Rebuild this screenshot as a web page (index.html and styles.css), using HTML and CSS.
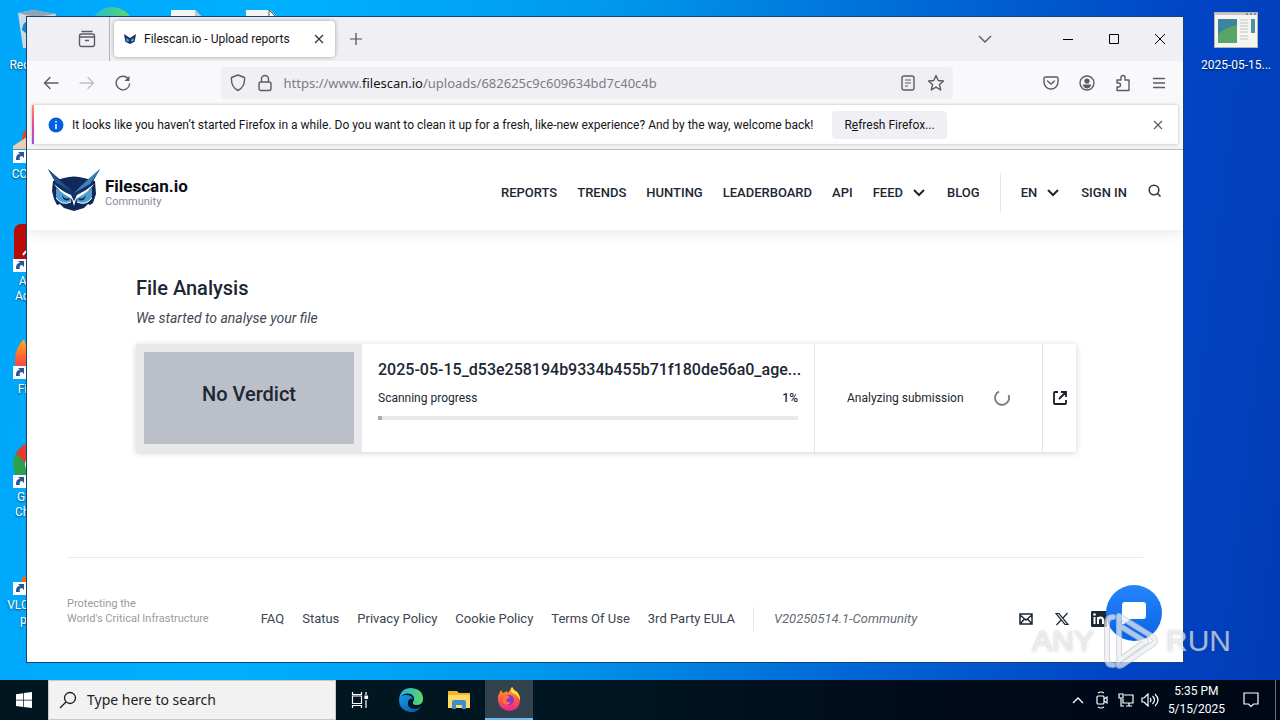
FILE: index.html
```html
<!DOCTYPE html>
<html lang="en">
<head>
<meta charset="utf-8">
<meta name="viewport" content="width=device-width, initial-scale=1">
<title>Filescan.io - Upload reports</title>
<link rel="stylesheet" href="styles.css">
</head>
<body>
<div class="desktop">
  <div class="shortcut recycle">
    <svg width="44" height="40" viewBox="0 0 44 40"><path d="M0 3 15 0l23 4-5 34H5z" fill="#c9dbe6"/><path d="m0 3 15-3 23 4-21 3z" fill="#8da5b4"/><path d="M5 15c4-6 9-3 8 1l-4 8-5-4z" fill="#1684cf"/></svg>
    <span>Recycle Bin</span>
  </div>
  <div class="shortcut edge-top">
    <svg width="44" height="44" viewBox="0 0 44 44"><defs><linearGradient id="eg"><stop offset="0" stop-color="#22b8dc"/><stop offset="1" stop-color="#62da62"/></linearGradient></defs><circle cx="22" cy="22" r="22" fill="url(#eg)"/></svg>
  </div>
  <div class="shortcut doc-a"><svg width="32" height="40" viewBox="0 0 32 40"><path d="M0 0h24l8 8v32H0z" fill="#f4f4f4"/><path d="M24 0v8h8z" fill="#b9c6ce"/></svg></div>
  <div class="shortcut doc-b"><svg width="32" height="40" viewBox="0 0 32 40"><path d="M0 0h24l8 8v32H0z" fill="#f4f4f4"/><path d="M23 0v9h9z" fill="#fff" stroke="#555"/></svg></div>
  <div class="shortcut row-1">
    <svg width="46" height="44" viewBox="0 0 46 44"><path d="M9 18C9 8 15 2 25 0v20z" fill="#df4429"/><path d="M0 23 14 14l20 4v8H0z" fill="#edcfad"/><rect y="27" width="13" height="13" fill="#fff"/><path d="M3 37c0-4 1-6 4-6l-2-2h6v6l-2-2c-2 0-3 2-2 4z" fill="#2a5699"/></svg>
    <span>CCleaner</span>
  </div>
  <div class="shortcut row-2">
    <svg width="46" height="48" viewBox="0 0 46 48"><rect x="1" width="44" height="46" rx="7" fill="#b80c09"/><path d="M10 31q3-5 8-5" stroke="#fff" stroke-width="2" fill="none"/><rect y="35" width="13" height="13" fill="#fff"/><path d="M3 45c0-4 1-6 4-6l-2-2h6v6l-2-2c-2 0-3 2-2 4z" fill="#2a5699"/></svg>
    <span>Adobe<br>Acrobat</span>
  </div>
  <div class="shortcut row-3">
    <svg width="46" height="44" viewBox="0 0 46 44"><defs><linearGradient id="ff" x2="0" y2="1"><stop offset="0" stop-color="#ffb01f"/><stop offset=".5" stop-color="#ff5a36"/><stop offset="1" stop-color="#e8249a"/></linearGradient></defs><path d="M2 20Q3 9 11 1l2 6 12-2 20 12v14L22 42Q1 38 2 20" fill="url(#ff)"/><rect y="28" width="13" height="13" fill="#fff"/><path d="M3 38c0-4 1-6 4-6l-2-2h6v6l-2-2c-2 0-3 2-2 4z" fill="#2a5699"/></svg>
    <span>Firefox</span>
  </div>
  <div class="shortcut row-4">
    <svg width="46" height="46" viewBox="0 0 46 46"><circle cx="22" cy="22" r="22" fill="#2ba14b"/><path d="M3 11Q10 0 22 0v22h-9z" fill="#e33a33"/><circle cx="22" cy="22" r="10" fill="#fff"/><rect y="33" width="13" height="13" fill="#fff"/><path d="M3 43c0-4 1-6 4-6l-2-2h6v6l-2-2c-2 0-3 2-2 4z" fill="#2a5699"/></svg>
    <span>Google<br>Chrome</span>
  </div>
  <div class="shortcut row-5">
    <svg width="46" height="44" viewBox="0 0 46 44"><path d="M9 24 15 21 20 0l18 40H9z" fill="#ee6d0a"/><rect y="28" width="13" height="13" fill="#fff"/><path d="M3 38c0-4 1-6 4-6l-2-2h6v6l-2-2c-2 0-3 2-2 4z" fill="#2a5699"/></svg>
    <span>VLC media<br>player</span>
  </div>
  <div class="shortcut file-icon">
    <svg width="44" height="36" viewBox="0 0 44 36"><rect x=".5" y=".5" width="43" height="35" fill="#f5f5f2" stroke="#b8b5ab"/><path d="M1 2h42" stroke="#c9c9c9" stroke-width="2"/><path d="M32 2h10" stroke="#31506e" stroke-width="1" stroke-dasharray="2 2"/><rect x="4" y="7" width="19" height="24" fill="#3f83a2"/><path d="M4 22Q12 15 23 13v18H4z" fill="#58a566"/><path d="M26 8h8m-8 3h8m-8 3h8m-8 3h8m-8 3h8m-8 4h8m-8 3h8" stroke="#bfc5c7"/><path d="M37 7h4v14h-4z" fill="#4b94a0"/></svg>
    <span>2025-05-15...</span>
  </div>

  <main class="window">
    <div class="tabbar">
      <button class="recent" aria-label="Recent browsing"><svg width="18" height="18" viewBox="0 0 18 18" fill="none" stroke="#5b5b66" stroke-width="1.4" stroke-linecap="round"><path d="M4 1.500h10"/><rect x="1.500" y="4" width="15" height="12.500" rx="2"/><path d="M2 7h14M7.500 10.500h3"/></svg></button>
      <div class="tab">
        <svg width="12" height="12" viewBox="0 0 52 44"><path d="M0 0 26 18 52 0 46 34 26 44 6 34z" fill="#123064"/><path d="M10 18l13 8-4 8-9-3zM42 18l-13 8 4 8 9-3z" fill="#5aa9d6"/></svg>
        <span class="tab-title">Filescan.io - Upload reports</span>
        <button class="tab-close" aria-label="Close tab"><svg width="10" height="10" viewBox="0 0 10 10" stroke="#333" stroke-width="1.200"><path d="m1 1 8 8M9 1 1 9"/></svg></button>
      </div>
      <button class="new-tab" aria-label="New tab"><svg width="12" height="12" viewBox="0 0 12 12" stroke="#4a4a52" stroke-width="1.200"><path d="M6 0v12M0 6h12"/></svg></button>
      <button class="all-tabs" aria-label="List all tabs"><svg width="14" height="8" viewBox="0 0 14 8" fill="none" stroke="#5b5b66" stroke-width="1.400"><path d="m1 1 6 6 6-6"/></svg></button>
      <button class="control" aria-label="Minimize"><svg width="10" height="10" viewBox="0 0 10 10" stroke="#000"><path d="M0 5.500h10"/></svg></button>
      <button class="control" aria-label="Maximize"><svg width="10" height="10" viewBox="0 0 10 10" fill="none" stroke="#000"><path d="M.5.5h9v9h-9z"/></svg></button>
      <button class="control" aria-label="Close"><svg width="12" height="12" viewBox="0 0 12 12" stroke="#000"><path d="m1 1 10 10M11 1 1 11"/></svg></button>
    </div>

    <div class="toolbar">
      <button class="tool" aria-label="Back"><svg width="16" height="16" viewBox="0 0 16 16" fill="none" stroke="#5b5b66" stroke-width="1.400" stroke-linecap="round" stroke-linejoin="round"><path d="M15 8H1.500M7 2.500 1.500 8 7 13.500"/></svg></button>
      <button class="tool" aria-label="Forward" disabled><svg width="16" height="16" viewBox="0 0 16 16" fill="none" stroke="#bdbdc3" stroke-width="1.400" stroke-linecap="round" stroke-linejoin="round"><path d="M1 8h13.500M9 2.500 14.500 8 9 13.500"/></svg></button>
      <button class="tool" aria-label="Reload"><svg width="16" height="16" viewBox="0 0 16 16" fill="none" stroke="#5b5b66" stroke-width="1.400" stroke-linecap="round"><path d="M13 3.500A6.800 6.800 0 1 0 14.700 9"/><path d="M14.500.8V6H9.500z" fill="#5b5b66" stroke="none"/></svg></button>
      <span class="spring"></span>
      <div class="urlbar">
        <svg width="16" height="18" viewBox="0 0 16 18" fill="none" stroke="#5b5b66" stroke-width="1.400" stroke-linejoin="round"><path d="m8 1 6.500 2.500c.5 6-1.500 10.500-6.500 13-5-2.500-7-7-6.500-13z"/></svg>
        <svg width="14" height="18" viewBox="0 0 14 18" fill="none" stroke="#5b5b66" stroke-width="1.400"><rect x="1" y="8" width="12" height="8.500" rx="2"/><path d="M3.500 8V5a3.500 3.500 0 0 1 7 0v3"/></svg>
        <div class="url" role="textbox" aria-label="Address" contenteditable="true" spellcheck="false">https://www.<b>filescan.io</b>/uploads/682625c9c609634bd7c40c4b</div>
        <svg width="14" height="16" viewBox="0 0 14 16" fill="none" stroke="#5b5b66" stroke-width="1.400"><rect x="1" y="1" width="12" height="14" rx="2"/><path d="M4 5h6M4 8h6M4 11h3" stroke-width="1.200"/></svg>
        <svg width="18" height="18" viewBox="0 0 18 18" fill="none" stroke="#5b5b66" stroke-width="1.400" stroke-linejoin="round"><path d="m9 1.500 2.200 5 5.300.5-4 3.600 1.200 5.400L9 13.200 4.300 16l1.200-5.400L1.500 7l5.300-.5z"/></svg>
      </div>
      <span class="spring"></span>
      <button class="tool" aria-label="Save to Pocket"><svg width="16" height="16" viewBox="0 0 16 16" fill="none" stroke="#5b5b66" stroke-width="1.400" stroke-linecap="round"><path d="M2.500 2h11q1.500 0 1.500 1.500V7A7 7 0 0 1 1 7V3.500Q1 2 2.500 2z"/><path d="m4.500 6 3.500 3 3.500-3"/></svg></button>
      <button class="tool" aria-label="Account"><svg width="16" height="16" viewBox="0 0 16 16" fill="none" stroke="#5b5b66" stroke-width="1.400"><circle cx="8" cy="8" r="7"/><circle cx="8" cy="6" r="2.600" fill="#5b5b66" stroke="none"/><path d="M3.500 9.500h9q-1.500 4-4.500 4t-4.500-4" fill="#5b5b66" stroke="none"/></svg></button>
      <button class="tool" aria-label="Extensions"><svg width="16" height="18" viewBox="0 0 16 18" fill="none" stroke="#5b5b66" stroke-width="1.400" stroke-linejoin="round"><path d="M2 6h4V3.500a2 2 0 0 1 4 0V6h4v10.500H2V13h1.500a2 2 0 0 0 0-4H2z"/></svg></button>
      <button class="tool" aria-label="Menu"><svg width="14" height="12" viewBox="0 0 14 12" stroke="#5b5b66" stroke-width="1.300"><path d="M1 1.500h12M1 6h12M1 10.500h12"/></svg></button>
    </div>

    <div class="notice-wrap">
      <div class="notice">
        <svg width="16" height="16" viewBox="0 0 16 16"><circle cx="8" cy="8" r="7.500" fill="#0560df"/><path d="M8 7v5M8 4v1.500" stroke="#fff" stroke-width="1.500"/></svg>
        <p>It looks like you haven’t started Firefox in a while. Do you want to clean it up for a fresh, like-new experience? And by the way, welcome back!</p>
        <button class="refresh">R<u>e</u>fresh Firefox...</button>
        <button class="notice-close" aria-label="Dismiss"><svg width="10" height="10" viewBox="0 0 10 10" stroke="#5b5b66" stroke-width="1.200"><path d="m1 1 8 8M9 1 1 9"/></svg></button>
      </div>
    </div>

    <div class="page">
      <header class="site-header">
        <a class="brand" href="#">
          <svg width="54" height="44" viewBox="0 0 54 44">
            <path d="M6 13 17 10q10-3 20 0l11 3 1 13-3 9-3 2-2-1-4 4-10 3-10-3-4-4-3 1-3-6-2-8z" fill="#12285c"/>
            <path d="M1 1 27 24 53 1 45 15 27 30 9 15z" fill="#153468"/>
            <path d="m53 1-17 15-9 9 16-9z" fill="#3d83b8"/>
            <path d="m1 1 14 14 10 8-16-8z" fill="#1f5590"/>
            <path d="M9 20q6 5 16 9l-1 5q-10 4-15-4M45 20q-6 5-16 9l1 5q10 4 15-4" fill="#4f9fd0"/>
            <path d="M7 16q9 8 17 11l3 6 3-6q9-4 17-11-4 7-15 13l-3 2-2 7-2-7-3-2Q11 23 7 16z" fill="#fff"/>
            <path d="M15 27q3 5 8 3l-1 2q-6 2-7-5M39 27q-3 5-8 3l1 2q6 2 7-5" fill="#12285c"/>
            <path d="M9 30q6 8 15 4M45 30q-6 8-15 4" fill="none" stroke="#fff"/>
          </svg>
          <span class="brand-text"><strong>Filescan.io</strong><small>Community</small></span>
        </a>
        <nav class="site-nav">
          <a href="#">REPORTS</a><a href="#">TRENDS</a><a href="#">HUNTING</a><a href="#">LEADERBOARD</a><a href="#">API</a>
          <button>FEED <svg width="12" height="8" viewBox="0 0 12 8" fill="none" stroke="#1b2733" stroke-width="2"><path d="m1 1 5 5 5-5"/></svg></button>
          <a href="#">BLOG</a>
          <span class="rule"></span>
          <button>EN <svg width="12" height="8" viewBox="0 0 12 8" fill="none" stroke="#1b2733" stroke-width="2"><path d="m1 1 5 5 5-5"/></svg></button>
          <a href="#">SIGN IN</a>
          <button class="search-btn" aria-label="Search"><svg width="14" height="14" viewBox="0 0 14 14" fill="none" stroke="#333b46" stroke-width="1.600"><circle cx="6" cy="6" r="4.800"/><path d="m9.500 9.500 3 3"/></svg></button>
        </nav>
      </header>

      <section class="analysis">
        <h1>File Analysis</h1>
        <p class="lead">We started to analyse your file</p>
        <article class="card">
          <div class="verdict"><div>No Verdict</div></div>
          <div class="details">
            <h2>2025-05-15_d53e258194b9334b455b71f180de56a0_age...</h2>
            <div class="progress-row"><label for="scan">Scanning progress</label><b>1%</b></div>
            <progress id="scan" value="1" max="100"></progress>
          </div>
          <div class="status"><span>Analyzing submission</span><svg width="16" height="16" viewBox="0 0 16 16" fill="none" stroke="#77797d" stroke-width="1.800"><path d="M5 1.500A7 7 0 1 0 14.500 5"/></svg></div>
          <a class="open" href="#" aria-label="Open report"><svg width="16" height="16" viewBox="0 0 16 16" fill="none" stroke="#17202c" stroke-width="1.800"><path d="M6 2H3q-1 0-1 1v10q0 1 1 1h10q1 0 1-1v-3M9 2h5v5M14 2 7 9"/></svg></a>
        </article>
      </section>

      <footer class="site-footer">
        <p class="motto">Protecting the<br>World's Critical Infrastructure</p>
        <nav class="footer-nav">
          <a href="#">FAQ</a><a href="#">Status</a><a href="#">Privacy Policy</a><a href="#">Cookie Policy</a><a href="#">Terms Of Use</a><a href="#">3rd Party EULA</a>
          <em>V20250514.1-Community</em>
        </nav>
        <div class="social">
          <a href="#" aria-label="Email"><svg width="14" height="12" viewBox="0 0 14 12" fill="none" stroke="#1b2733" stroke-width="1.500"><path d="M1 1h12v10H1zM1 2l6 5 6-5M1 11l4.500-5M13 11 8.500 6"/></svg></a>
          <a href="#" aria-label="X"><svg width="14" height="14" viewBox="0 0 14 14" fill="none" stroke="#1b2733"><path d="M1 1.500h3l9 11h-3zM12.500 1 8 6M6 8l-4.500 5" stroke-width="1.200"/></svg></a>
          <a href="#" aria-label="LinkedIn"><svg width="16" height="16" viewBox="0 0 16 16"><rect width="16" height="16" rx="1" fill="#1b2733"/><path d="M3.500 6v7M7 6v7M7 9q0-2.500 2.500-2.500T12 9v4" fill="none" stroke="#fff" stroke-width="2"/><circle cx="3.500" cy="3.500" r="1.300" fill="#fff"/></svg></a>
        </div>
      </footer>
      <button class="chat" aria-label="Open chat"><svg width="26" height="24" viewBox="0 0 26 24"><path d="M4 1h18q3 0 3 3v11q0 3-3 3H9l-6 5q-2 1-2-1V4q0-3 3-3" fill="#fff"/></svg></button>
    </div>
  </main>

  <div class="watermark" aria-hidden="true">
    <span>ANY</span>
    <svg width="56" height="62" viewBox="0 0 56 62" fill="none" stroke-linejoin="round" stroke-linecap="round"><path d="M11 7Q5 7 5 14v34q0 7 6 7M17 6v40M17 6l34 21q4 4 0 7L20 55q-4 2-4-1t3-5l25-18M18 16l26 16" stroke="#c5c9d0" stroke-width="6"/><path d="M11 7Q5 7 5 14v34q0 7 6 7M17 6v40M17 6l34 21q4 4 0 7L20 55q-4 2-4-1t3-5l25-18M18 16l26 16" stroke="#eceef2" stroke-width="4"/></svg>
    <span>RUN</span>
  </div>
</div>

<div class="taskbar">
  <button class="start" aria-label="Start"><svg width="16" height="16" viewBox="0 0 16 16" fill="#fff"><path d="M0 2.200 7.300 1.200v6.500H0zM8 1.100 16 0v7.700H8zM0 8.400h7.300v6.500L0 13.900zM8 8.400h8V16l-8-1.100z"/></svg></button>
  <label class="task-search">
    <svg width="18" height="18" viewBox="0 0 18 18" fill="none" stroke="#1a1a1a" stroke-width="1.300"><circle cx="11" cy="7" r="5.500"/><path d="m7 11-6 6"/></svg>
    <input type="text" placeholder="Type here to search" aria-label="Search">
  </label>
  <button class="task" aria-label="Task view"><svg width="18" height="18" viewBox="0 0 18 18" fill="none" stroke="#fff" stroke-width="1.200"><path d="M1.500 5h9v7.500h-9zM1.500 1v2.500h9V1M1.500 17v-2.500h9V17M15 1v3M15 9v8"/><path d="M14 5h2.500v2.500H14z" fill="#fff"/></svg></button>
  <button class="task edge" aria-label="Edge"><svg width="26" height="26" viewBox="0 0 26 26"><defs><linearGradient id="e1"><stop offset="0" stop-color="#23a9ed"/><stop offset="1" stop-color="#5bdb61"/></linearGradient><linearGradient id="e2" x2="1" y2="1"><stop offset="0" stop-color="#1a9be6"/><stop offset="1" stop-color="#0b4fa0"/></linearGradient></defs><path d="M1 13Q2 1 13 1q12 1 12 11 0 6-7 6-4 0-3-3 3-5-2-8Q4 5 1 13" fill="url(#e1)"/><path d="M1 13q1-5 7-5 6 0 7 4-4-1-5 3-1 6 6 7 4 0 7-2-4 6-11 5Q1 23 1 13" fill="url(#e2)"/></svg></button>
  <button class="task" aria-label="File Explorer"><svg width="22" height="20" viewBox="0 0 22 20"><path d="M0 1h9l2 2h11v15H0z" fill="#f5b52a"/><path d="M0 5h22v13H0z" fill="#ffda66"/><path d="M4 19v-7q0-2 2-2h10q2 0 2 2v7h-4v-4H8v4z" fill="#3f8fc7"/></svg></button>
  <button class="task active" aria-label="Firefox"><svg width="24" height="24" viewBox="0 0 24 24"><path d="M1 9 4 3l2 3 4-2 1 2 4-6q2 4 5 5 3 3 3 8 0 10-11 11Q0 22 1 9" fill="url(#ff)"/><path d="M15 0q2 4 5 5 3 3 3 8-3-6-8-7-2-3 0-6" fill="#ffe040"/><circle cx="12" cy="13" r="5" fill="#8038d8"/><path d="M5 9q4-2 8 1l-4 3q1 3 5 2-4 5-8 1" fill="#ff7139"/></svg></button>
  <div class="tray">
    <button aria-label="Show hidden icons"><svg width="12" height="8" viewBox="0 0 12 8" fill="none" stroke="#fff" stroke-width="1.300"><path d="m1 7 5-5 5 5"/></svg></button>
    <button aria-label="Meet now"><svg width="12" height="18" viewBox="0 0 12 18" fill="none" stroke="#fff" stroke-width="1.200"><rect x="1" y="5" width="7" height="8" rx="1"/><path d="m8 8 3-2v6l-3-2M2 2q3-2 6 0M2 16q3 2 6 0"/></svg></button>
    <button aria-label="Network"><svg width="16" height="14" viewBox="0 0 16 14" fill="none" stroke="#fff" stroke-width="1.200"><path d="M6 2h9v8H5V6M8 13h6M11 10v3M1 1h4v4H1zM3 5v8h3"/></svg></button>
    <button aria-label="Volume"><svg width="18" height="14" viewBox="0 0 18 14" fill="none" stroke="#fff" stroke-width="1.200"><path d="M1 5h2l4-4v12L3 9H1zM9 5q2 2 0 4M11.500 3q4 4 0 8M14 1q6 6 0 12"/></svg></button>
    <time class="clock">5:35 PM<br>5/15/2025</time>
    <button class="action" aria-label="Notifications"><svg width="16" height="16" viewBox="0 0 16 16" fill="none" stroke="#fff" stroke-width="1.200"><path d="M1 1h14v11h-4.500L8 14.500 5.500 12H1z"/></svg></button>
    <span class="peek"></span>
  </div>
</div>
</body>
</html>
```
FILE: styles.css
```css
* { box-sizing: border-box; }

body {
  margin: 0;
  height: 100vh;
  display: flex;
  flex-direction: column;
  overflow: hidden;
  font: 12px/16px Roboto, "Open Sans", sans-serif;
  color: #15141a;
}

svg { display: block; flex: none; }
p, h1, h2 { margin: 0; }
a { color: inherit; text-decoration: none; }

button {
  display: flex;
  align-items: center;
  justify-content: center;
  flex: none;
  padding: 0;
  border: 0;
  background: none;
  color: inherit;
  font: inherit;
}

.desktop {
  position: relative;
  flex: 1;
  min-height: 0;
  background: linear-gradient(97deg, #00a6fa 0%, #00b0ff 22%, #0098ec 45%, #0068d6 68%, #0144c4 88%, #023cb6 100%);
}

/* Desktop shortcuts */
.shortcut {
  position: absolute;
  display: flex;
  flex-direction: column;
  align-items: center;
  width: 76px;
  line-height: 15px;
  color: #fff;
  text-align: center;
  text-shadow: 0 1px 2px rgba(0, 0, 0, .6);
}
.recycle { left: 2px; top: 10px; gap: 8px; }
.edge-top { left: 74px; top: 7px; }
.doc-a { left: 149px; top: 10px; }
.doc-b { left: 224px; top: 10px; }
.row-1 { left: -2px; top: 123px; }
.row-2 { left: -2px; top: 224px; gap: 2px; }
.row-3 { left: -2px; top: 338px; }
.row-4 { left: -2px; top: 442px; gap: 2px; }
.row-5 { left: -2px; top: 554px; }
.file-icon { right: 4px; top: 12px; width: 80px; gap: 10px; }

/* Browser window */
.window {
  position: absolute;
  inset: 16px 96px 17px 26px;
  display: flex;
  flex-direction: column;
  overflow: hidden;
  border: 1px solid #12466e;
  background: #fff;
}

.tabbar {
  display: flex;
  align-items: center;
  height: 44px;
  flex: none;
  padding-left: 37px;
  background: #f0f0f4;
}
.recent {
  width: 46px;
  height: 44px;
  border-right: 1px solid #b4b4b9;
}
.tab {
  display: flex;
  align-items: center;
  gap: 8px;
  width: 221px;
  height: 36px;
  margin-left: 4px;
  padding: 0 6px 0 10px;
  border-radius: 4px;
  background: #fff;
  box-shadow: 0 0 4px rgba(0, 0, 0, .35);
}
.tab-title { flex: 1; white-space: nowrap; }
.tab-close { width: 20px; height: 24px; }
.new-tab { width: 42px; height: 36px; }
.all-tabs { width: 36px; height: 36px; margin-left: auto; margin-right: 42px; }
.control { width: 46px; height: 44px; }

.toolbar {
  display: flex;
  align-items: center;
  height: 43px;
  flex: none;
  padding: 0 6px;
  background: #f9f9fb;
}
.tool { width: 36px; height: 32px; }
.spring { flex: 1 1 0; }
.urlbar {
  display: flex;
  align-items: center;
  gap: 12px;
  flex: 9 1 0;
  min-width: 0;
  height: 32px;
  padding: 0 8px 0 9px;
  border-radius: 4px;
  background: #f0f0f4;
}
.url {
  flex: 1;
  min-width: 0;
  overflow: hidden;
  font: 13px/20px "Noto Sans", sans-serif;
  color: #7c7c83;
  white-space: nowrap;
}
.url b { font-weight: 400; color: #15141a; }

.notice-wrap {
  flex: none;
  padding: 1px 5px 5px;
  border-bottom: 1px solid #c4c4c8;
  background: #f9f9fb;
}
.notice {
  display: flex;
  align-items: center;
  height: 39px;
  padding: 0 10px 0 14px;
  border-left: 2px solid;
  border-image: linear-gradient(#ff9a50, #ef3f9b, #a14ff0) 1;
  background: #fff;
  box-shadow: 0 0 3px rgba(0, 0, 0, .25);
}
.notice p { margin: 0 19px 0 8px; white-space: nowrap; }
.refresh {
  height: 28px;
  padding: 0 12px;
  border-radius: 4px;
  background: #f0f0f4;
  white-space: nowrap;
}
.notice-close { width: 20px; height: 24px; margin-left: auto; }

/* Site */
.page {
  position: relative;
  display: flex;
  flex: 1;
  flex-direction: column;
  min-height: 0;
  color: #1b2733;
}
.site-header {
  display: flex;
  align-items: center;
  justify-content: space-between;
  height: 80px;
  flex: none;
  padding: 0 20px;
  box-shadow: 0 2px 14px rgba(0, 0, 0, .1);
}
.brand { display: flex; align-items: center; gap: 4px; }
.brand-text { display: flex; flex-direction: column; padding-top: 6px; }
.brand strong { font-size: 17px; line-height: 18px; font-weight: 700; color: #0c0d12; }
.brand small { font-size: 11px; line-height: 14px; color: #828b9e; }
.site-nav {
  display: flex;
  align-items: center;
  gap: 20px;
  padding-top: 6px;
  font-size: 13px;
  font-weight: 500;
}
.site-nav button { gap: 10px; padding-right: 2px; }
.rule { width: 1px; height: 40px; background: #e4e5e7; }
.site-nav .search-btn { width: 16px; padding: 0 0 4px; }

.analysis { padding: 45px 107px 0 109px; }
.analysis h1 { font-size: 20px; line-height: 26px; font-weight: 500; }
.lead {
  margin: 7px 0 16px;
  font-size: 14px;
  line-height: 20px;
  font-style: italic;
  color: #414853;
}
.card {
  display: flex;
  height: 108px;
  background: #fff;
  box-shadow: 0 1px 6px rgba(0, 0, 0, .18);
}
.verdict { flex: 0 0 226px; display: flex; padding: 8px; background: #e9e9eb; }
.verdict div {
  flex: 1;
  padding-top: 29px;
  background: #bbbfc7;
  font-size: 20px;
  line-height: 26px;
  font-weight: 500;
  text-align: center;
}
.details { flex: 1; min-width: 0; padding: 16px; }
.details h2 {
  font-size: 16px;
  line-height: 20px;
  font-weight: 500;
  white-space: nowrap;
}
.progress-row {
  display: flex;
  justify-content: space-between;
  margin: 10px 0;
}
.progress-row b { font-weight: 500; }
progress {
  display: block;
  width: 100%;
  height: 4px;
  border: 0;
  appearance: none;
}
progress::-webkit-progress-bar { background: #e9e9eb; }
progress::-webkit-progress-value { background: #a9abb0; }
.status {
  flex: 0 0 228px;
  display: flex;
  align-items: center;
  justify-content: space-between;
  padding: 0 32px;
  border-left: 1px solid #e4e5e7;
}
.open {
  flex: 0 0 34px;
  display: flex;
  align-items: center;
  justify-content: center;
  border-left: 1px solid #e4e5e7;
}

.site-footer {
  display: flex;
  align-items: center;
  gap: 52px;
  margin: auto 40px 0;
  padding: 33px 9px 31px 0;
  border-top: 1px solid #e8e9eb;
}
.motto { font-size: 11px; line-height: 15px; color: #999b9f; white-space: nowrap; }
.footer-nav {
  display: flex;
  align-items: center;
  gap: 18px;
  padding-top: 16px;
  font-size: 13px;
  color: #3c4450;
  white-space: nowrap;
}
.footer-nav em { padding-left: 20px; border-left: 1px solid #e4e5e7; line-height: 24px; color: #666b73; }
.social { display: flex; align-items: center; gap: 22px; margin-left: auto; padding: 16px 27px 0 0; }
.chat {
  position: absolute;
  right: 21px;
  bottom: 21px;
  width: 56px;
  height: 56px;
  border-radius: 50%;
  background: linear-gradient(#2585fa, #0863e5);
}

.watermark {
  position: absolute;
  right: 49px;
  bottom: 8px;
  display: flex;
  align-items: center;
  gap: 8px;
  font: 30px/60px "Liberation Sans", sans-serif;
  color: #e3e6eb;
  text-shadow: 0 0 3px rgba(70, 70, 80, .4);
  opacity: .72;
  pointer-events: none;
}

/* Taskbar */
.taskbar {
  display: flex;
  height: 40px;
  flex: none;
  background: linear-gradient(90deg, #001720, #001622 45%, #000a1a 75%, #000817);
  color: #fff;
}
.start, .task { width: 48px; }
.task-search {
  display: flex;
  align-items: center;
  gap: 10px;
  width: 288px;
  padding: 0 10px;
  border: 1px solid #c9c9c9;
  background: #f2f2f2;
}
.task-search input {
  flex: 1;
  min-width: 0;
  padding: 0;
  border: 0;
  outline: 0;
  background: none;
  font: 14px/20px "Noto Sans", sans-serif;
}
.task-search input::placeholder { color: #222; opacity: 1; }
.edge { margin-left: 3px; }
.active { margin-left: 2px; border-bottom: 2px solid #76b9ed; background: #33434d; }
.tray {
  display: flex;
  align-items: center;
  margin-left: auto;
}
.tray button { width: 24px; height: 40px; }
.clock { margin: 0 2px 0 6px; line-height: 18px; text-align: center; }
.tray .action { width: 48px; }
.peek { width: 5px; height: 40px; border-left: 1px solid #65707a; }
```
